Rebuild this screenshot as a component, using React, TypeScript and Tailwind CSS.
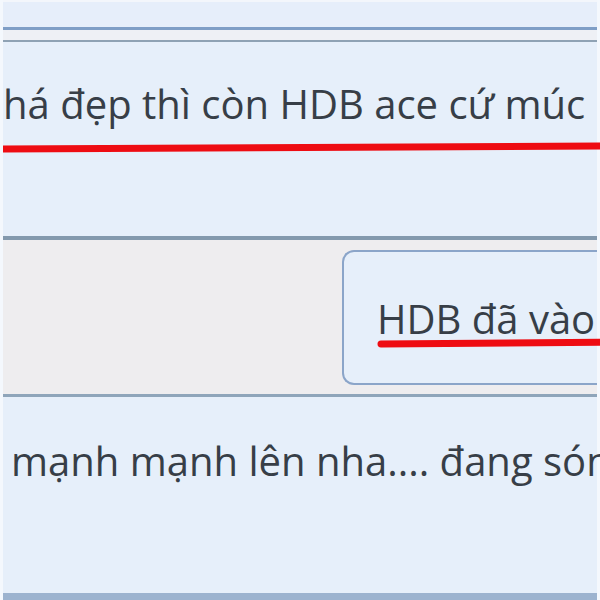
export default function App() {
  return (
    <div className="relative w-[600px] h-[600px] overflow-hidden bg-[#e6eefa] font-['Open_Sans','Noto_Sans',sans-serif] text-[#373e47]">
      <div className="flex flex-col h-full border-x-[3px] border-x-[#f4f8fd]">
        {/* header strip */}
        <div className="h-[27px] border-t-2 border-t-[#f3f6fb] bg-[#e6eefa]" />
        <div className="h-[3px] bg-[#7f9ec6]" />
        <div className="h-[10px] bg-[#eef0f5]" />
        <div className="h-[2px] bg-[#8fa2b4]" />

        {/* first message */}
        <div className="relative h-[194px] bg-[#e6effa]">
          <p className="absolute left-0 top-[42px] whitespace-nowrap text-[40px] leading-none">
            há đẹp thì còn HDB ace cứ múc
          </p>
          <svg className="absolute left-0 top-0" width="600" height="194">
            <path d="M-4 107 L604 104" stroke="#ee0c12" strokeWidth="7" />
          </svg>
        </div>
        <div className="h-[4px] bg-[#8399ad]" />

        {/* quoted row */}
        <div className="flex h-[154px] bg-[#eeedef]">
          <div className="w-[339px] shrink-0" />
          <div className="relative mt-[10px] mb-[9px] flex-1 rounded-l-[12px] border-2 border-r-0 border-[#8ba5c9] bg-[#e6effa]">
            <p className="absolute left-[33px] top-[47px] whitespace-nowrap text-[40px] leading-none">
              HDB đã vào
            </p>
            <svg className="absolute left-0 top-0" width="280" height="140">
              <path d="M37 92 L290 90" stroke="#ee0c12" strokeWidth="7" strokeLinecap="round" />
            </svg>
          </div>
        </div>
        <div className="h-[3px] bg-[#8fa5ba]" />

        {/* second message */}
        <div className="relative flex-1 bg-[#e6effa]">
          <p className="absolute left-[8px] top-[44px] whitespace-nowrap text-[40px] leading-none">
            mạnh mạnh lên nha.... đang són
          </p>
        </div>
        <div className="h-[7px] bg-[#9cb3cf]" />
      </div>
    </div>
  );
}
